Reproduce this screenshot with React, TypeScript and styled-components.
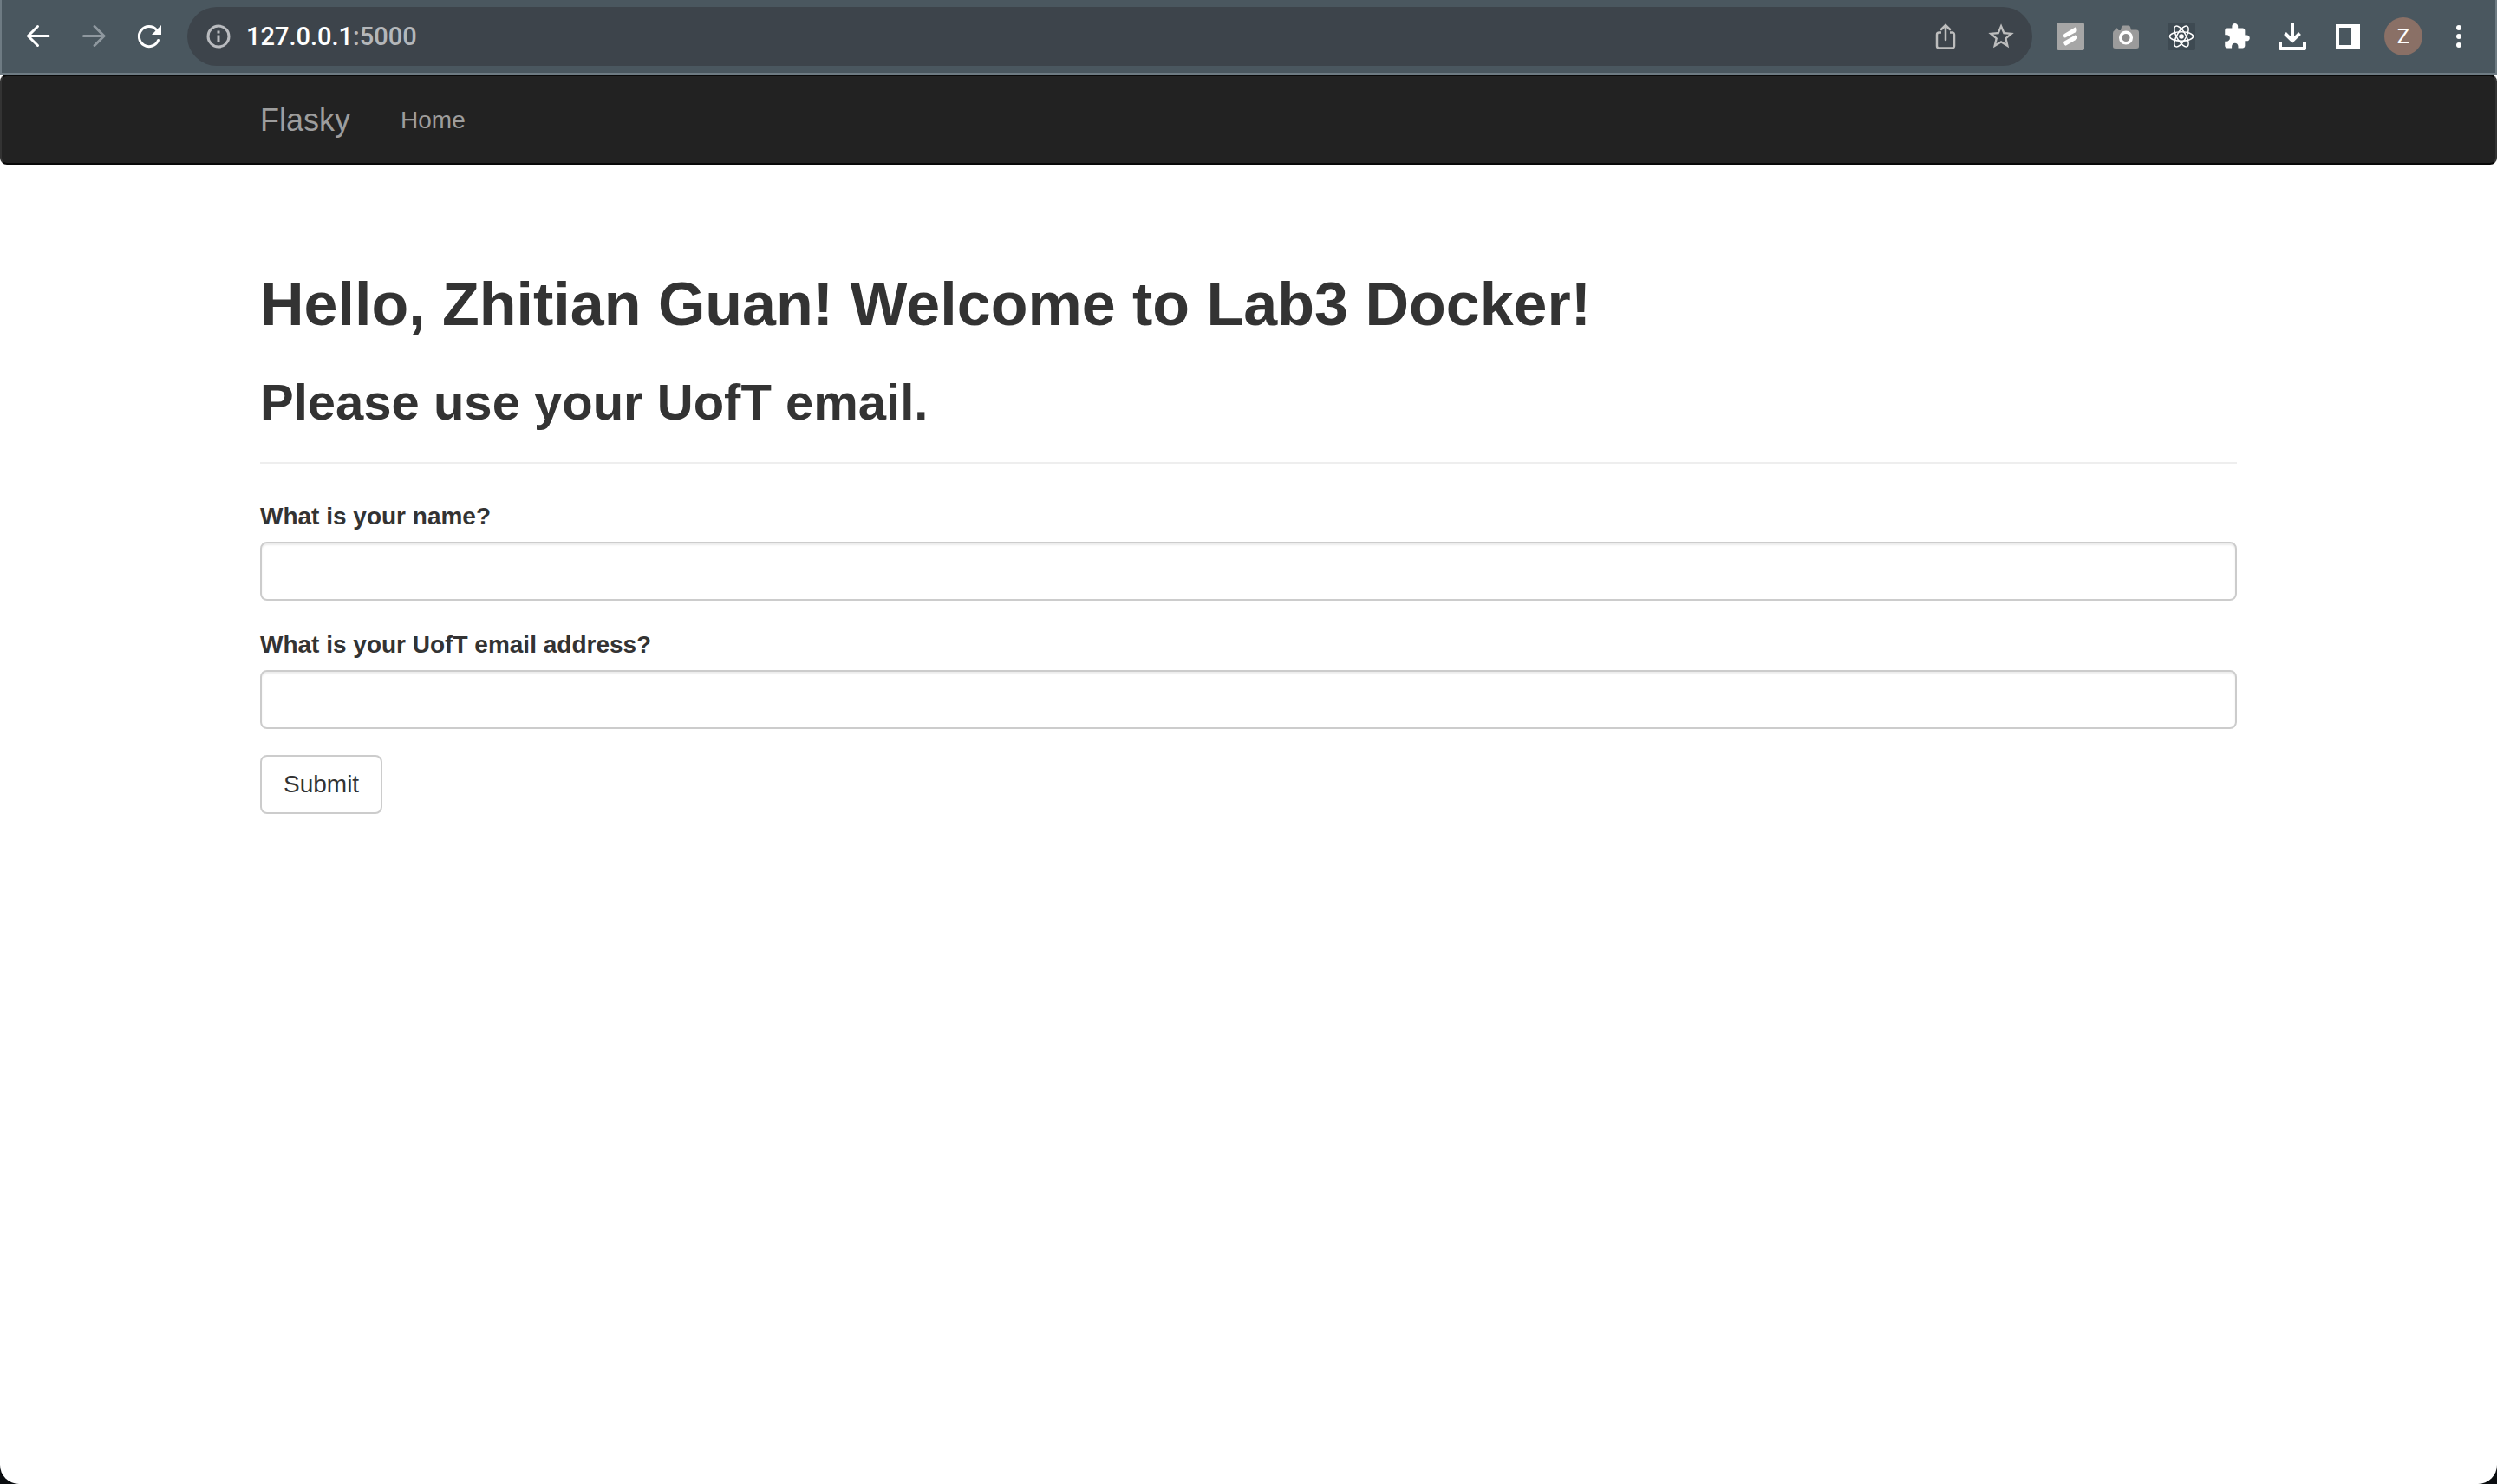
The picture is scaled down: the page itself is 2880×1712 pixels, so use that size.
import React from "react";
import styled, { createGlobalStyle } from "styled-components";

const GlobalStyle = createGlobalStyle`
  *, *::before, *::after {
    box-sizing: border-box;
  }
  html {
    background: #0a0d10;
  }
  body {
    margin: 0;
    color: #333;
    font-family: "Helvetica Neue", Helvetica, "Liberation Sans", Arial, sans-serif;
    font-size: 28px;
    line-height: 40px;
  }
`;

const Window = styled.div`
  display: flex;
  flex-direction: column;
  min-height: 100vh;
  overflow: hidden;
  background: #fff;
  border-radius: 0 0 22px 22px;
`;

const Toolbar = styled.header`
  display: flex;
  align-items: center;
  gap: 12px;
  padding: 8px 10px;
  background: #4a575f;
  border: 2px solid #6e7b83;
  border-top: 0;
`;

const IconGroup = styled.div`
  display: flex;
  align-items: center;
`;

const IconButton = styled.button<{ $color?: string }>`
  display: flex;
  align-items: center;
  justify-content: center;
  width: 64px;
  height: 68px;
  padding: 0;
  border: 0;
  background: none;
  color: ${(p) => p.$color ?? "#fff"};
`;

const Glyph = styled.svg`
  display: block;
  width: 32px;
  height: 32px;
`;

const Omnibox = styled.div`
  display: flex;
  flex: 1;
  align-items: center;
  padding: 0 4px;
  border-radius: 34px;
  background: #3d444b;
`;

const Address = styled.div`
  flex: 1;
  color: #b4b7ba;
  font-family: Roboto, sans-serif;
  font-size: 29px;
  font-weight: 500;
  line-height: 36px;
`;

const Host = styled.span`
  color: #fff;
`;

const Avatar = styled.span`
  display: flex;
  align-items: center;
  justify-content: center;
  width: 44px;
  height: 44px;
  border-radius: 50%;
  background: #8a7066;
  color: #fff;
  font-family: Roboto, sans-serif;
  font-size: 24px;
`;

const Navbar = styled.nav`
  margin-bottom: 40px;
  border: 2px solid #080808;
  border-right-color: #333;
  border-left-color: #333;
  border-radius: 8px;
  background: #222;
`;

const Container = styled.div`
  width: 100%;
  max-width: 2340px;
  margin: 0 auto;
  padding: 0 30px;
`;

const NavRow = styled(Container)`
  display: flex;
  align-items: center;
  gap: 58px;
  height: 100px;
  padding-top: 2px;
`;

const NavLink = styled.a<{ $brand?: boolean }>`
  color: #9d9d9d;
  font-size: ${(p) => (p.$brand ? 36 : 28)}px;
  line-height: 40px;
  text-decoration: none;
`;

const PageHeader = styled.div`
  margin: 80px 0 40px;
  padding-bottom: 18px;
  border-bottom: 2px solid #eee;
`;

const Title = styled.h1`
  margin: 0 0 39px;
  font-size: 70px;
  font-weight: 700;
  line-height: 82px;
`;

const Subtitle = styled.h2`
  margin: 0 0 18px;
  font-size: 58px;
  font-weight: 700;
  line-height: 66px;
`;

const Form = styled.form`
  display: flex;
  flex-direction: column;
  align-items: flex-start;
  gap: 30px;
`;

const Field = styled.div`
  display: flex;
  flex-direction: column;
  gap: 8px;
  width: 100%;
`;

const Label = styled.label`
  font-weight: 700;
  line-height: 42px;
`;

const TextInput = styled.input`
  width: 100%;
  height: 68px;
  padding: 12px 24px;
  border: 2px solid #ccc;
  border-radius: 8px;
  background: #fff;
  box-shadow: inset 0 2px 2px rgba(0, 0, 0, 0.075);
  color: #555;
  font: inherit;
`;

const SubmitButton = styled.button`
  padding: 12px 25px;
  border: 2px solid #ccc;
  border-radius: 8px;
  background: #fff;
  color: #333;
  font: inherit;
`;

type IconProps = { children: React.ReactNode };

const Icon = ({ children }: IconProps) => (
  <Glyph viewBox="0 0 32 32" fill="none" aria-hidden="true">
    {children}
  </Glyph>
);

const line = {
  stroke: "currentColor",
  strokeWidth: 3,
  strokeLinecap: "round" as const,
};

const BackIcon = () => (
  <Icon>
    <path {...line} d="M28 15.5H5M15.5 4.5l-11 11 11 11" />
  </Icon>
);

const ForwardIcon = () => (
  <Icon>
    <path {...line} d="M4.5 15.5H27.5M17 4.5l11 11-11 11" />
  </Icon>
);

const ReloadIcon = () => (
  <Icon>
    <path {...line} d="M26.5 20.5A11.5 11.5 0 1 1 24.5 8.5" />
    <path fill="currentColor" d="M30 3v11H19z" />
  </Icon>
);

const InfoIcon = () => (
  <Icon>
    <circle cx="16" cy="16" r="12" stroke="currentColor" strokeWidth="3" />
    <path fill="currentColor" d="M14.5 9.5h3v3h-3zM14.5 14.5h3V23h-3z" />
  </Icon>
);

const ShareIcon = () => (
  <Icon>
    <path
      stroke="currentColor"
      strokeWidth="2.5"
      d="M11 11.5H8.5a2.500 2.500 0 0 0-2.500 2.500v13a2.500 2.500 0 0 0 2.500 2.500h15a2.500 2.500 0 0 0 2.500-2.500V14a2.500 2.500 0 0 0-2.500-2.500H21"
    />
    <path {...line} strokeWidth="2.5" d="M16 20V4M11 8l5-5 5 5" />
  </Icon>
);

const StarIcon = () => (
  <Icon>
    <path
      fill="currentColor"
      transform="translate(-1.6 -1.7) scale(1.47)"
      d="M22 9.240l-7.190-.620L12 2 9.190 8.630 2 9.240l5.460 4.730L5.820 21 12 17.270 18.180 21l-1.630-7.030L22 9.240zM12 15.400l-3.760 2.270 1-4.280-3.320-2.880 4.380-.380L12 6.100l1.710 4.040 4.380.380-3.320 2.880 1 4.280L12 15.400z"
    />
  </Icon>
);

const StripesIcon = () => (
  <Icon>
    <rect width="32" height="32" rx="2.5" fill="#a6a6a6" />
    <path
      fill="#fff"
      d="M8 14.500Q8 13.500 9 13L21.500 5.500Q23 5 23.500 7V9.500Q23.500 10.500 22.500 11L10 17.500Q8.500 17.500 8 16zM8 23Q8 22 9 21.500L21.500 14.500Q23 14 24 15.500V18Q24 19 23 19.500L11 26.500Q10 27 9 25.500z"
    />
  </Icon>
);

const CameraIcon = () => (
  <Icon>
    <path
      fill="#9b9b9b"
      d="M3 9l1.500-2.500h1.500L7.500 9H10l1-4q.500-1.500 2-1.500h6q1.500 0 2 1.500l1 3.500h6q3 0 3 3v16q0 2.500-3 2.500H4q-3 0-3-2.500V12q0-2 2-3z"
    />
    <circle cx="16" cy="17.5" r="6.3" fill="#8c8c8c" stroke="#fff" strokeWidth="3.5" />
  </Icon>
);

const ReactIcon = () => (
  <Icon>
    <rect width="32" height="32" rx="2" fill="#3e4a52" />
    <g stroke="#fff" strokeWidth="1.5">
      {[0, 60, 120].map((angle) => (
        <ellipse key={angle} cx="16" cy="16" rx="13.5" ry="5.2" transform={`rotate(${angle} 16 16)`} />
      ))}
    </g>
    <circle cx="16" cy="16" r="2.8" fill="#fff" />
  </Icon>
);

const PuzzleIcon = () => (
  <Icon>
    <path
      fill="currentColor"
      transform="translate(-0.5 -0.4) scale(1.36)"
      d="M20.500 11H19V7c0-1.100-.900-2-2-2h-4V3.500C13 2.120 11.880 1 10.500 1S8 2.120 8 3.500V5H4c-1.100 0-1.990.900-1.990 2v3.800H3.500c1.490 0 2.700 1.210 2.700 2.700s-1.210 2.700-2.700 2.700H2V20c0 1.100.900 2 2 2h3.800v-1.500c0-1.490 1.210-2.700 2.700-2.700 1.490 0 2.700 1.210 2.700 2.700V22H17c1.100 0 2-.900 2-2v-4h1.500c1.380 0 2.500-1.120 2.500-2.500S21.880 11 20.500 11z"
    />
  </Icon>
);

const DownloadIcon = () => (
  <Icon>
    <path stroke="currentColor" strokeWidth="4" d="M16 0v21M7.5 12.5L16 21l8.5-8.5" />
    <path stroke="currentColor" strokeWidth="4" strokeLinejoin="round" d="M2 22v8h28v-8" />
  </Icon>
);

const SidePanelIcon = () => (
  <Icon>
    <path fill="currentColor" fillRule="evenodd" d="M2 2h28v28H2zM6 6v20h14V6z" />
  </Icon>
);

const MenuIcon = () => (
  <Icon>
    <g fill="currentColor">
      <circle cx="16" cy="6" r="3" />
      <circle cx="16" cy="16" r="3" />
      <circle cx="16" cy="26" r="3" />
    </g>
  </Icon>
);

const extensions = [
  { label: "Stripes extension", icon: <StripesIcon /> },
  { label: "Screen capture", icon: <CameraIcon /> },
  { label: "React Developer Tools", icon: <ReactIcon /> },
  { label: "Extensions", icon: <PuzzleIcon /> },
  { label: "Downloads", icon: <DownloadIcon /> },
  { label: "Side panel", icon: <SidePanelIcon /> },
  { label: "Profile", icon: <Avatar>Z</Avatar> },
  { label: "Menu", icon: <MenuIcon /> },
];

const fields = [
  { id: "name", label: "What is your name?", type: "text" },
  { id: "email", label: "What is your UofT email address?", type: "text" },
];

export default function App() {
  return (
    <>
      <GlobalStyle />
      <Window>
        <Toolbar>
          <IconGroup>
            <IconButton aria-label="Back"><BackIcon /></IconButton>
            <IconButton aria-label="Forward" $color="#8f989f"><ForwardIcon /></IconButton>
            <IconButton aria-label="Reload"><ReloadIcon /></IconButton>
          </IconGroup>
          <Omnibox>
            <IconButton aria-label="Site information" $color="#b9bbbf"><InfoIcon /></IconButton>
            <Address>
              <Host>127.0.0.1</Host>:5000
            </Address>
            <IconButton aria-label="Share" $color="#bdbdbd"><ShareIcon /></IconButton>
            <IconButton aria-label="Bookmark" $color="#bdbdbd"><StarIcon /></IconButton>
          </Omnibox>
          <IconGroup>
            {extensions.map((item) => (
              <IconButton key={item.label} aria-label={item.label}>{item.icon}</IconButton>
            ))}
          </IconGroup>
        </Toolbar>
        <Navbar>
          <NavRow>
            <NavLink href="#" $brand>Flasky</NavLink>
            <NavLink href="#">Home</NavLink>
          </NavRow>
        </Navbar>
        <Container as="main">
          <PageHeader>
            <Title>Hello, Zhitian Guan! Welcome to Lab3 Docker!</Title>
            <Subtitle>Please use your UofT email.</Subtitle>
          </PageHeader>
          <Form onSubmit={(event) => event.preventDefault()}>
            {fields.map((field) => (
              <Field key={field.id}>
                <Label htmlFor={field.id}>{field.label}</Label>
                <TextInput id={field.id} name={field.id} type={field.type} />
              </Field>
            ))}
            <SubmitButton type="submit">Submit</SubmitButton>
          </Form>
        </Container>
      </Window>
    </>
  );
}
